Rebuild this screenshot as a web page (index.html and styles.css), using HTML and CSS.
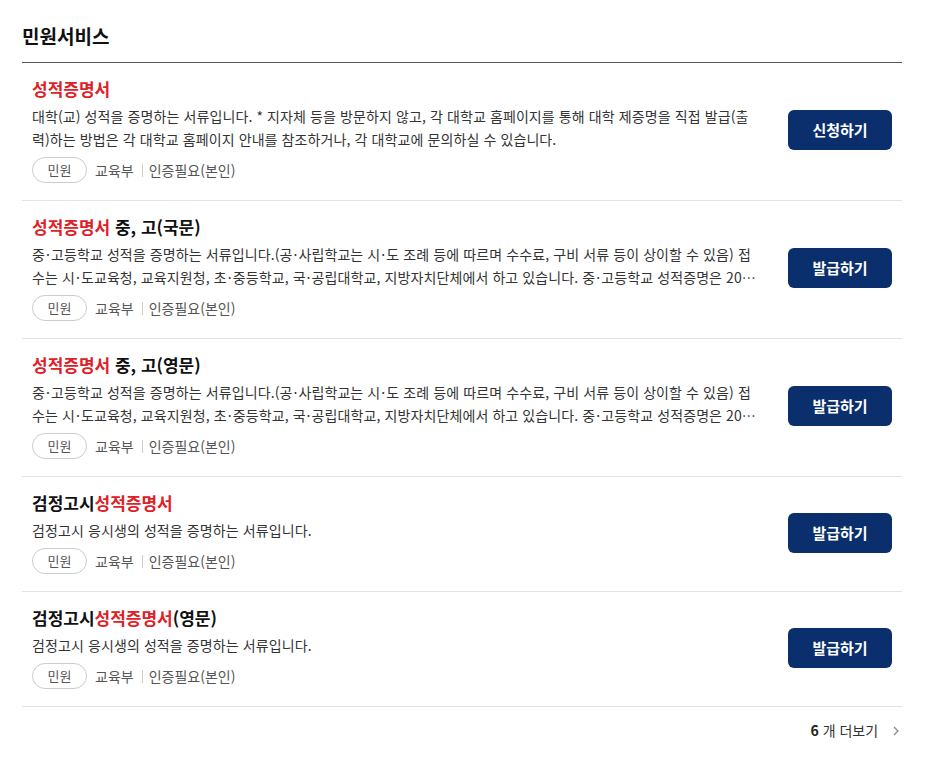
FILE: index.html
```html
<!DOCTYPE html>
<html lang="ko">
<head>
<meta charset="utf-8">
<title>민원서비스</title>
<link rel="stylesheet" href="styles.css">
</head>
<body>
<section class="svc">
<h2 class="svc-title">민원서비스</h2>
<ul class="svc-list">
  <li class="svc-item">
    <div class="svc-info">
      <h3 class="svc-name"><em>성적증명서</em></h3>
      <p class="svc-desc">대학(교) 성적을 증명하는 서류입니다. * 지자체 등을 방문하지 않고, 각 대학교 홈페이지를 통해 대학 제증명을 직접 발급(출력)하는 방법은 각 대학교 홈페이지 안내를 참조하거나, 각 대학교에 문의하실 수 있습니다.</p>
      <div class="svc-meta">
        <span class="tag">민원</span>
        <span class="org">교육부</span>
        <span class="auth">인증필요(본인)</span>
      </div>
    </div>
    <a class="btn" href="#">신청하기</a>
  </li>
  <li class="svc-item">
    <div class="svc-info">
      <h3 class="svc-name"><em>성적증명서</em> 중, 고(국문)</h3>
      <p class="svc-desc">중&#8202;·&#8202;고등학교 성적을 증명하는 서류입니다.(공&#8202;·&#8202;사립학교는 시&#8202;·&#8202;도 조례 등에 따르며 수수료, 구비 서류 등이 상이할 수 있음) 접수는 시&#8202;·&#8202;도교육청, 교육지원청, 초&#8202;·&#8202;중등학교, 국&#8202;·&#8202;공립대학교, 지방자치단체에서 하고 있습니다. 중&#8202;·&#8202;고등학교 성적증명은 2003년 이후 졸업자에 한하여 발급 가능합니다.</p>
      <div class="svc-meta">
        <span class="tag">민원</span>
        <span class="org">교육부</span>
        <span class="auth">인증필요(본인)</span>
      </div>
    </div>
    <a class="btn" href="#">발급하기</a>
  </li>
  <li class="svc-item">
    <div class="svc-info">
      <h3 class="svc-name"><em>성적증명서</em> 중, 고(영문)</h3>
      <p class="svc-desc">중&#8202;·&#8202;고등학교 성적을 증명하는 서류입니다.(공&#8202;·&#8202;사립학교는 시&#8202;·&#8202;도 조례 등에 따르며 수수료, 구비 서류 등이 상이할 수 있음) 접수는 시&#8202;·&#8202;도교육청, 교육지원청, 초&#8202;·&#8202;중등학교, 국&#8202;·&#8202;공립대학교, 지방자치단체에서 하고 있습니다. 중&#8202;·&#8202;고등학교 성적증명은 2003년 이후 졸업자에 한하여 발급 가능합니다.</p>
      <div class="svc-meta">
        <span class="tag">민원</span>
        <span class="org">교육부</span>
        <span class="auth">인증필요(본인)</span>
      </div>
    </div>
    <a class="btn" href="#">발급하기</a>
  </li>
  <li class="svc-item">
    <div class="svc-info">
      <h3 class="svc-name">검정고시<em>성적증명서</em></h3>
      <p class="svc-desc">검정고시 응시생의 성적을 증명하는 서류입니다.</p>
      <div class="svc-meta">
        <span class="tag">민원</span>
        <span class="org">교육부</span>
        <span class="auth">인증필요(본인)</span>
      </div>
    </div>
    <a class="btn" href="#">발급하기</a>
  </li>
  <li class="svc-item">
    <div class="svc-info">
      <h3 class="svc-name">검정고시<em>성적증명서</em>(영문)</h3>
      <p class="svc-desc">검정고시 응시생의 성적을 증명하는 서류입니다.</p>
      <div class="svc-meta">
        <span class="tag">민원</span>
        <span class="org">교육부</span>
        <span class="auth">인증필요(본인)</span>
      </div>
    </div>
    <a class="btn" href="#">발급하기</a>
  </li>
</ul>
<div class="svc-more">
  <a href="#"><strong>6</strong> 개 더보기
    <svg width="12" height="12" viewBox="0 0 12 12"><path d="M4 2 L8 6 L4 10" fill="none" stroke="#888" stroke-width="1.3"/></svg>
  </a>
</div>
</section>
</body>
</html>
```

FILE: styles.css
```css
body {
    margin: 0;
    background: #fff;
    font-family: "Noto Sans CJK KR", "Noto Sans", sans-serif;
    color: #222;
}
.svc {
    padding: 0 27px 0 22px;
}
.svc-title {
    margin: 0;
    padding-top: 22px;
    font-size: 19px;
    line-height: 28px;
    font-weight: 700;
    color: #111;
    padding-bottom: 12px;
    border-bottom: 1px solid #555;
}
.svc-list {
    list-style: none;
    margin: 0;
    padding: 0;
}
.svc-item {
    display: flex;
    align-items: center;
    padding: 14px 10px 17px 10px;
    border-bottom: 1px solid #e3e3e3;
}
.svc-info {
    flex: 1;
    min-width: 0;
    padding-right: 30px;
}
.svc-name {
    margin: 0;
    font-size: 17px;
    line-height: 24px;
    font-weight: 700;
    color: #111;
}
.svc-name em {
    font-style: normal;
    color: #de2027;
}
.svc-desc {
    margin: 4px 0 0;
    font-size: 14px;
    line-height: 23px;
    letter-spacing: 0.1px;
    color: #333;
    display: -webkit-box;
    -webkit-line-clamp: 2;
    -webkit-box-orient: vertical;
    overflow: hidden;
}
.svc-meta {
    display: flex;
    align-items: center;
    margin-top: 6px;
    font-size: 14px;
    color: #555;
}
.tag {
    box-sizing: border-box;
    width: 55px;
    height: 26px;
    line-height: 24px;
    text-align: center;
    border: 1px solid #ccc;
    border-radius: 13px;
    font-size: 13px;
    color: #555;
    margin-right: 8px;
}
.org::after {
    content: "";
    display: inline-block;
    width: 1px;
    height: 13px;
    background: #ccc;
    margin: 0 6px 0 8px;
    vertical-align: -1px;
}
.btn {
    flex: none;
    width: 104px;
    height: 40px;
    line-height: 40px;
    text-align: center;
    background: #0a2f6c;
    color: #fff;
    border-radius: 6px;
    font-size: 15px;
    font-weight: 700;
    text-decoration: none;
}
.svc-more {
    text-align: right;
    padding: 10px 0 0;
}
.svc-more a {
    font-size: 14px;
    color: #333;
    text-decoration: none;
    line-height: 20px;
}
.svc-more strong {
    font-weight: 700;
    color: #222;
}
.svc-more svg {
    margin-left: 8px;
    vertical-align: -1px;
}
```
